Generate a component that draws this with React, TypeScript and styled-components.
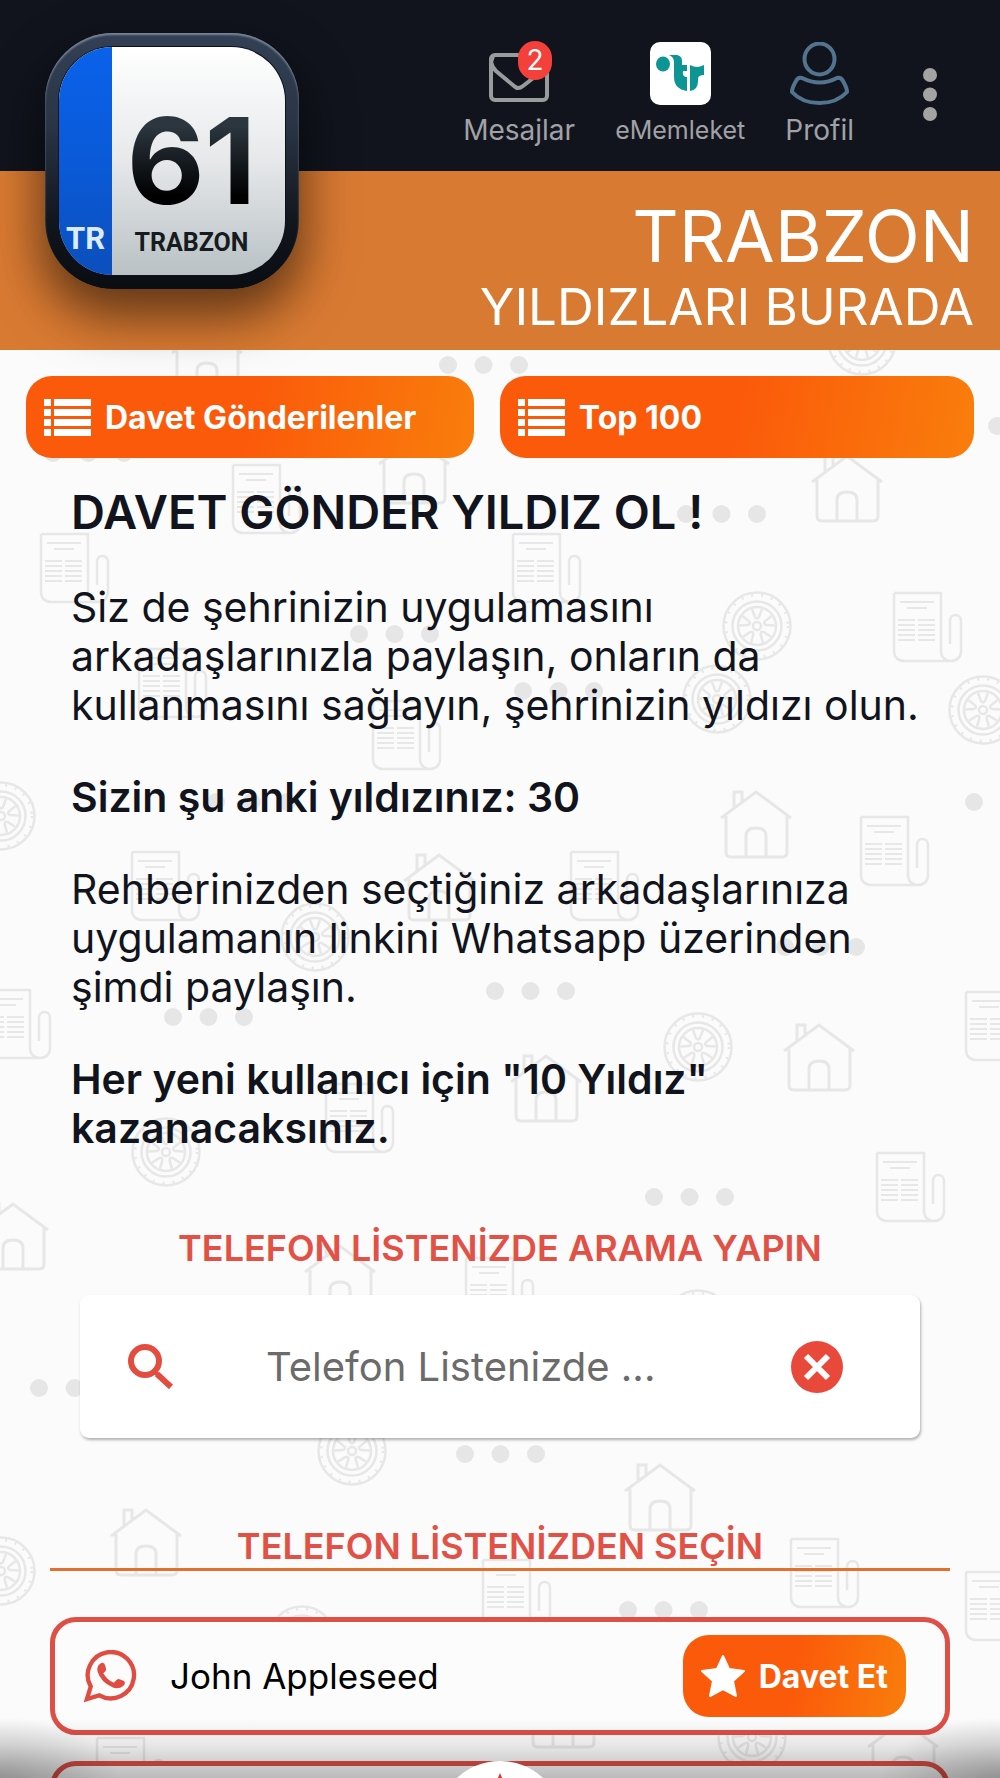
import React from 'react';
import styled, { createGlobalStyle } from 'styled-components';

const GlobalStyle = createGlobalStyle`
  *, *::before, *::after { box-sizing: border-box; }
  body { margin: 0; background: #fbfbfb; font-family: Inter, "Noto Sans", sans-serif; color: #11141c; }
  h1, h2, h3, p, ul { margin: 0; padding: 0; }
  button { font: inherit; border: 0; padding: 0; background: none; cursor: pointer; }
`;

const Screen = styled.div`
  position: relative;
  display: flex;
  flex-direction: column;
  height: 100vh;
  overflow: hidden;
`;

const Header = styled.header`
  position: relative;
  z-index: 1;
`;

const TopBar = styled.nav`
  display: flex;
  justify-content: flex-end;
  align-items: flex-start;
  gap: 40px;
  height: 171px;
  padding: 41px 63px 0 0;
  background: #11141d;
`;

const NavItem = styled.a<{ $compact?: boolean }>`
  display: flex;
  flex-direction: column;
  align-items: center;
  gap: 6px;
  color: #a1a2a5;
  font-size: ${(p) => (p.$compact ? 25 : 28)}px;
  line-height: 36px;
  text-decoration: none;
`;

const NavIcon = styled.span`
  position: relative;
  display: grid;
  place-items: center;
  height: 65px;
`;

const Badge = styled.span`
  position: absolute;
  top: 0;
  right: 0;
  width: 34px;
  height: 39px;
  border-radius: 17px;
  background: #f4403a;
  color: #fff;
  font-size: 28px;
  line-height: 39px;
  text-align: center;
`;

const MoreButton = styled.button`
  display: grid;
  margin: 27px 0 0 29px;
  width: 14px;
`;

const Banner = styled.div`
  display: flex;
  flex-direction: column;
  align-items: flex-end;
  height: 179px;
  padding: 25px 26px 0 0;
  background: #d97a32;
  color: #fff;
`;

const City = styled.h1`
  font-size: 72px;
  font-weight: 400;
  line-height: 80px;
`;

const Slogan = styled.p`
  font-size: 51px;
  line-height: 62px;
`;

const Plate = styled.div`
  position: absolute;
  top: 33px;
  left: 45px;
  display: flex;
  width: 254px;
  height: 256px;
  padding: 14px;
  border-radius: 68px;
  background: linear-gradient(#334055, #2a3546 35%, #11151c 75%, #0a0d12);
  box-shadow: inset 0 2px 2px #7b8798, 0 24px 50px 4px rgba(0, 0, 0, 0.55);
`;

const PlateFace = styled.div`
  display: flex;
  flex: 1;
  overflow: hidden;
  border-radius: 54px;
  background: linear-gradient(#ffffff, #e6e8ea 50%, #b9c1c5);
  box-shadow: 0 0 0 1px #0d1118;
`;

const PlateStrip = styled.div`
  display: flex;
  align-items: flex-end;
  justify-content: center;
  width: 53px;
  padding-bottom: 18px;
  background: linear-gradient(#0a62ea, #0a5ad8 50%, #0c4fbd);
  color: #dcebff;
  font: 700 31px/36px Roboto, sans-serif;
`;

const PlateBody = styled.div`
  display: flex;
  flex: 1;
  flex-direction: column;
  align-items: center;
  padding: 56px 26px 0 12px;
  color: #161b20;
`;

const PlateNumber = styled.span`
  font-size: 120px;
  font-weight: 700;
  line-height: 116px;
  color: transparent;
  background: linear-gradient(#2b363f 20%, #000 80%);
  background-clip: text;
`;

const PlateName = styled.span`
  font: 700 25px/48px Roboto, sans-serif;
`;

const Backdrop = styled.svg`
  position: absolute;
  inset: 0;
  width: 100%;
  height: 100%;
  fill: none;
  stroke: #e7e7e8;
  stroke-width: 2.5;
`;

const Content = styled.main`
  position: relative;
  display: flex;
  flex-direction: column;
  padding: 26px 26px 0;
`;

const Actions = styled.div`
  display: grid;
  grid-template-columns: 17fr 18fr;
  gap: 26px;
`;

const OrangeButton = styled.button`
  display: flex;
  align-items: center;
  gap: 14px;
  height: 82px;
  padding: 0 18px;
  border-radius: 26px;
  background: linear-gradient(100deg, #fb5a0a 50%, #f97e0c);
  color: #fff;
  font-size: 32px;
  font-weight: 700;
  white-space: nowrap;
`;

const Intro = styled.section`
  display: flex;
  flex-direction: column;
  gap: 43px;
  padding: 26px 46px 0 45px;
`;

const IntroTitle = styled.h2`
  font-size: 47px;
  font-weight: 600;
  line-height: 56px;
`;

const Paragraph = styled.p<{ $strong?: boolean }>`
  font-size: 41px;
  font-weight: ${(p) => (p.$strong ? 600 : 400)};
  line-height: 49px;
`;

const SectionTitle = styled.h3<{ $ruled?: boolean }>`
  margin: ${(p) => (p.$ruled ? '86px 24px 46px' : '73px 24px 25px')};
  border-bottom: ${(p) => (p.$ruled ? '3px solid #e2702f' : '0')};
  color: #e25146;
  font-size: 36px;
  font-weight: 600;
  line-height: 44px;
  text-align: center;
`;

const SearchBox = styled.form`
  display: flex;
  align-items: center;
  height: 143px;
  margin: 0 54px;
  padding: 0 77px 0 48px;
  border-radius: 9px;
  background: #fff;
  box-shadow: 1px 2px 3px rgba(0, 0, 0, 0.3);
`;

const SearchInput = styled.input`
  flex: 1;
  min-width: 0;
  margin: 0 0 0 93px;
  padding: 0;
  border: 0;
  outline: 0;
  background: none;
  color: #11141c;
  font: 400 40px/48px Inter, "Noto Sans", sans-serif;
  &::placeholder { color: #6b6b6b; opacity: 1; }
`;

const IconButton = styled.button`
  display: grid;
`;

const Contacts = styled.ul`
  display: flex;
  flex-direction: column;
  gap: 26px;
  margin: 0 24px;
  list-style: none;
`;

const Contact = styled.li`
  display: flex;
  align-items: center;
  gap: 33px;
  height: 118px;
  padding: 0 39px 0 29px;
  border: 5px solid #de4f46;
  border-radius: 26px;
  background: #fcfcfc;
`;

const ContactName = styled.span`
  flex: 1;
  color: #000;
  font-size: 35px;
`;

const BottomShade = styled.div`
  position: absolute;
  inset: auto 0 0;
  height: 60px;
  background:
    radial-gradient(120px 60px at 0 100%, rgba(0, 0, 0, 0.22), transparent),
    radial-gradient(120px 60px at 100% 100%, rgba(0, 0, 0, 0.22), transparent),
    linear-gradient(transparent, rgba(0, 0, 0, 0.08) 45%, rgba(0, 0, 0, 0.26));
  pointer-events: none;
`;

const HomeButton = styled.button`
  position: absolute;
  bottom: -109px;
  left: 50%;
  display: grid;
  justify-items: center;
  width: 126px;
  height: 126px;
  margin-left: -63px;
  padding-top: 11px;
  border-radius: 50%;
  background: #fff;
`;

type Spot = [number, number];

const papers: Spot[] = [
  [232, 464], [40, 533], [512, 533], [893, 592], [138, 648], [372, 700], [131, 851], [570, 851],
  [860, 816], [-18, 989], [965, 991], [325, 1083], [876, 1152], [465, 1257], [482, 1559],
  [790, 1538], [965, 1571], [96, 1737],
];
const houses: Spot[] = [
  [171, 325], [378, 436], [811, 454], [720, 790], [403, 853], [783, 1023], [510, 1054], [-23, 1202],
  [304, 1244], [624, 1463], [110, 1508], [527, 1680], [867, 1719],
];
const wheels: Spot[] = [
  [862, 341], [757, 626], [717, 699], [983, 710], [1, 816], [315, 937], [698, 1047], [166, 1152],
  [698, 1324], [352, 1451], [1, 1571], [302, 1640], [752, 1737],
];
const dots: Spot[] = [
  [448, 365], [53, 453], [686, 514], [997, 426], [359, 634], [523, 691], [216, 802], [974, 802],
  [785, 947], [495, 991], [173, 1017], [654, 1197], [39, 1388], [465, 1454], [628, 1610],
];

const Pattern = () => (
  <Backdrop aria-hidden="true">
    <defs>
      <g id="paper">
        <path d="M1 1h47v58c0 6 4 10 10 10s10-4 10-10V29c0-8-11-8-11 0v23M1 1v58c0 6 4 10 10 10h47" />
        <path strokeWidth="2" d="M7 10h34M14 16h20M5 28h17M5 33h17M5 38h17M5 43h17M5 48h17M25 28h17M25 33h17M25 38h17M25 43h17M25 48h17" />
      </g>
      <g id="house" strokeWidth="3">
        <path d="M1 28 36 2l35 26M6 26v36q0 5 5 5h51q5 0 5-5V26M26 66V46q0-8 10-8t10 8v20M14 18V2h8v10" />
      </g>
      <g id="wheel">
        <circle r="33.5" />
        <circle r="31" strokeDasharray="2 8" />
        <circle r="24.5" />
        <circle r="19" />
        <circle r="4" />
        {[0, 72, 144, 216, 288].map((a) => (
          <path key={a} transform={`rotate(${a})`} d="M-5-17-2-9q2 3 4 0l3-8" />
        ))}
      </g>
      <g id="dots" fill="#e6e6e7" stroke="none">
        <circle r="9" />
        <circle cx="35.5" r="9" />
        <circle cx="71" r="9" />
      </g>
    </defs>
    {papers.map(([x, y]) => <use key={`${x} ${y}`} href="#paper" x={x} y={y} />)}
    {houses.map(([x, y]) => <use key={`${x} ${y}`} href="#house" x={x} y={y} />)}
    {wheels.map(([x, y]) => <use key={`${x} ${y}`} href="#wheel" x={x} y={y} />)}
    {dots.map(([x, y]) => <use key={`${x} ${y}`} href="#dots" x={x} y={y} />)}
  </Backdrop>
);

const MailIcon = () => (
  <svg width="66" height="63" viewBox="0 0 66 63" fill="none" stroke="#9a9b9d" strokeWidth="4">
    <rect x="5" y="13" width="56" height="45" rx="4" />
    <path d="M7 14 5 20q1 5 5 9l18 15q4 4 9 0l22-17" />
  </svg>
);

const MemleketIcon = () => (
  <svg width="61" height="63" viewBox="0 0 61 63">
    <rect width="61" height="63" rx="10" fill="#fff" />
    <g fill="#0d9494">
      <ellipse cx="13" cy="22" rx="7" ry="7.5" />
      <path d="M19 13h8q5 1 5 6v4h5v6h-4q-1 6 4 6v14q-13-2-13-14V20q0-5-5-7z" />
      <path d="M40 23q4 2 7 2 3 0 7-2v10q-6 0-6 4v2q0 9-8 10z" />
    </g>
  </svg>
);

const ProfileIcon = () => (
  <svg width="59" height="63" viewBox="0 0 59 63" fill="none" stroke="#52748f" strokeWidth="4" strokeLinejoin="round">
    <ellipse cx="29.5" cy="17" rx="15" ry="15.5" />
    <path d="M12 36q-4-1-6 3Q2 46 2 50q10 11 27.5 11T57 50q0-4-4-11-2-4-6-3-17 9-35 0z" />
  </svg>
);

const MoreIcon = () => (
  <svg width="14" height="54" viewBox="0 0 14 54" fill="#a3a3a3">
    <circle cx="7" cy="7" r="7" />
    <circle cx="7" cy="26.5" r="7" />
    <circle cx="7" cy="46" r="7" />
  </svg>
);

const ListIcon = () => (
  <svg width="47" height="37" viewBox="0 0 47 37" fill="#fff">
    {[0, 10, 20, 30].map((y) => (
      <path key={y} d={`M0 ${y}h7v7H0zM10 ${y}h37v7H10z`} />
    ))}
  </svg>
);

const SearchIcon = () => (
  <svg width="45" height="45" viewBox="0 0 45 45" fill="none" stroke="#e34d40">
    <circle cx="17" cy="17" r="14" strokeWidth="6" />
    <path d="m29 30 14 13" strokeWidth="6" />
    <path d="m26 27 4 4" strokeWidth="4" />
  </svg>
);

const ClearIcon = () => (
  <svg width="52" height="52" viewBox="0 0 52 52">
    <circle cx="26" cy="26" r="26" fill="#e9493a" />
    <path d="m15 15 22 22m0-22L15 37" stroke="#fff" strokeWidth="6" />
  </svg>
);

const WhatsappIcon = () => (
  <svg width="53" height="53" viewBox="0 0 55 55">
    <path d="M3 51 7 38A24 24 0 1 1 16 47z" fill="none" stroke="#e04b42" strokeWidth="4.5" />
    <path d="M17 14q4-2 5 2l1 4q0 2-3 4 4 7 11 10 3-4 5-4l5 2q3 2 0 5-5 4-11 2Q17 33 14 22q-1-5 3-8z" fill="#e04b42" />
  </svg>
);

const StarIcon = () => (
  <svg width="44" height="42" viewBox="0 0 44 42" fill="#fff" stroke="#fff" strokeWidth="2" strokeLinejoin="round">
    <path d="m22 1 6 13 15 2-11 10 3 15-13-7-13 7 3-15L1 16l15-2z" />
  </svg>
);

export default function App() {
  return (
    <Screen>
      <GlobalStyle />
      <Pattern />
      <Header>
        <TopBar>
          <NavItem href="#mesajlar">
            <NavIcon><MailIcon /><Badge>2</Badge></NavIcon>
            Mesajlar
          </NavItem>
          <NavItem href="#ememleket" $compact>
            <NavIcon><MemleketIcon /></NavIcon>
            eMemleket
          </NavItem>
          <NavItem href="#profil">
            <NavIcon><ProfileIcon /></NavIcon>
            Profil
          </NavItem>
          <MoreButton type="button"><MoreIcon /></MoreButton>
        </TopBar>
        <Banner>
          <City>TRABZON</City>
          <Slogan>YILDIZLARI BURADA</Slogan>
        </Banner>
        <Plate>
          <PlateFace>
            <PlateStrip>TR</PlateStrip>
            <PlateBody>
              <PlateNumber>61</PlateNumber>
              <PlateName>TRABZON</PlateName>
            </PlateBody>
          </PlateFace>
        </Plate>
      </Header>
      <Content>
        <Actions>
          <OrangeButton type="button"><ListIcon />Davet Gönderilenler</OrangeButton>
          <OrangeButton type="button"><ListIcon />Top 100</OrangeButton>
        </Actions>
        <Intro>
          <IntroTitle>DAVET GÖNDER YILDIZ OL !</IntroTitle>
          <Paragraph>
            Siz de şehrinizin uygulamasını arkadaşlarınızla paylaşın, onların da kullanmasını
            sağlayın, şehrinizin yıldızı olun.
          </Paragraph>
          <Paragraph $strong>Sizin şu anki yıldızınız: 30</Paragraph>
          <Paragraph>
            Rehberinizden seçtiğiniz arkadaşlarınıza uygulamanın linkini Whatsapp üzerinden şimdi
            paylaşın.
          </Paragraph>
          <Paragraph $strong>Her yeni kullanıcı için "10 Yıldız" kazanacaksınız.</Paragraph>
        </Intro>
        <SectionTitle><label htmlFor="search">TELEFON LİSTENİZDE ARAMA YAPIN</label></SectionTitle>
        <SearchBox>
          <SearchIcon />
          <SearchInput id="search" type="text" placeholder="Telefon Listenizde ..." />
          <IconButton type="reset"><ClearIcon /></IconButton>
        </SearchBox>
        <SectionTitle $ruled>TELEFON LİSTENİZDEN SEÇİN</SectionTitle>
        <Contacts>
          <Contact>
            <WhatsappIcon />
            <ContactName>John Appleseed</ContactName>
            <OrangeButton type="button"><StarIcon />Davet Et</OrangeButton>
          </Contact>
          <Contact />
        </Contacts>
      </Content>
      <BottomShade />
      <HomeButton type="button">
        <svg width="44" height="44" viewBox="0 0 44 42" fill="#e0372f">
          <path d="m22 0 6 14 16 2-12 10 4 16-14-8-14 8 4-16L0 16l16-2z" />
        </svg>
      </HomeButton>
    </Screen>
  );
}
